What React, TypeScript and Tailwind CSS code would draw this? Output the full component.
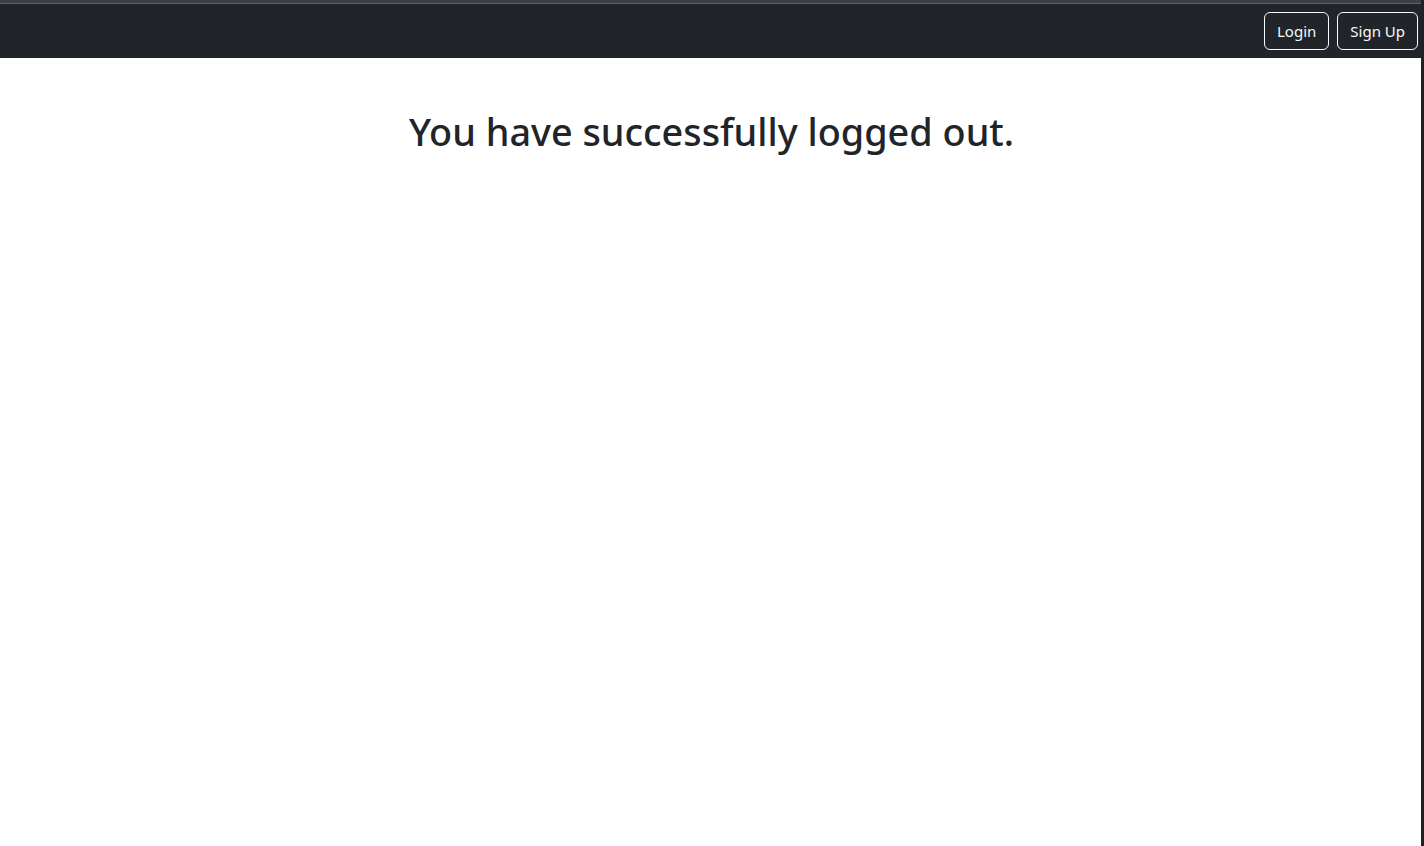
export default function App() {
  return (
    <div
      className="flex min-h-[846px] flex-col border-r-[3px] border-[#202124] bg-white"
      style={{ fontFamily: '"Noto Sans", "Open Sans", sans-serif' }}
    >
      <div className="h-[3px] bg-[#3c3f43]" />
      <div className="h-px bg-[#5f6368]" />
      <nav className="flex h-[54px] items-center justify-end gap-2 bg-[#212529] pr-[3px]">
        <button className="h-[38px] rounded-[6px] border border-[#f8f9fa] px-3 text-[15px] text-[#f8f9fa]">
          Login
        </button>
        <button className="h-[38px] rounded-[6px] border border-[#f8f9fa] px-3 text-[15px] text-[#f8f9fa]">
          Sign Up
        </button>
      </nav>
      <main className="flex flex-col items-center pt-[51px]">
        <h1 className="pl-[2px] text-[37.8px] leading-[1.2] font-medium text-[#212529]">
          You have successfully logged out.
        </h1>
      </main>
    </div>
  );
}
